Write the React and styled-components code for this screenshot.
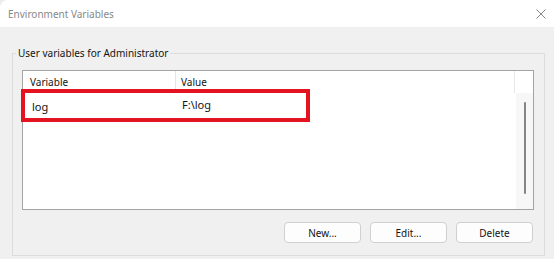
import React from "react";
import styled, { createGlobalStyle } from "styled-components";

const Global = createGlobalStyle`
  html, body { margin: 0; padding: 0; background: #ececec; }
  body { font-family: "Noto Sans", "Open Sans", sans-serif; font-size: 10px; color: #141414; }
`;

const Window = styled.div`
  width: 554px;
  height: 259px;
  display: flex;
  flex-direction: column;
  background: #f0f0f0;
  border-top-left-radius: 8px;
  overflow: hidden;
`;

const TitleBar = styled.div`
  height: 27px;
  flex: none;
  background: #ffffff;
  display: flex;
  align-items: center;
  justify-content: space-between;
  padding: 0 8px 0 8px;
  box-sizing: border-box;
`;

const Title = styled.span`
  color: #888888;
  font-size: 10px;
`;

const Body = styled.div`
  flex: 1;
  padding: 18px 9px 0 12px;
  box-sizing: border-box;
  display: flex;
  flex-direction: column;
`;

const Group = styled.fieldset`
  margin: 0;
  border: 1px solid #dcdcdc;
  padding: 0 10px 12px 9px;
  display: flex;
  flex-direction: column;
  min-width: 0;
`;

const Legend = styled.legend`
  margin-left: -6px;
  padding: 0 2px;
  line-height: 16px;
  font-size: 10px;
  color: #141414;
`;

const ListBox = styled.div`
  position: relative;
  margin-top: 9px;
  height: 140px;
  box-sizing: border-box;
  border: 1px solid #a3a3a3;
  background: #ffffff;
  display: flex;
`;

const ListArea = styled.div`
  flex: 1;
  display: flex;
  flex-direction: column;
`;

const Row = styled.div`
  display: flex;
  height: ${(p) => (p.$header ? "22px" : "24px")};
  align-items: center;
`;

const Cell = styled.div`
  box-sizing: border-box;
  width: ${(p) => (p.$w ? `${p.$w}px` : "auto")};
  flex: ${(p) => (p.$w ? "none" : "1")};
  padding-left: ${(p) => p.$pl}px;
  height: 100%;
  display: flex;
  align-items: center;
  font-size: ${(p) => (p.$big ? "11px" : "10px")};
  border-right: ${(p) => (p.$sep ? "1px solid #e5e5e5" : "none")};
  transform: translateY(${(p) => p.$dy || 0}px);
`;

const ScrollBar = styled.div`
  width: 17px;
  flex: none;
  display: flex;
  flex-direction: column;
  border-left: 1px solid #ffffff;
`;

const ScrollHead = styled.div`
  height: 22px;
  border-left: 1px solid #e8e8e8;
  margin-left: -2px;
`;

const Track = styled.div`
  flex: 1;
  background: #f7f7f7;
  display: flex;
  justify-content: center;
  padding-top: 9px;
  padding-bottom: 15px;
`;

const Thumb = styled.div`
  width: 2px;
  height: 92px;
  background: #858585;
  border-radius: 1px;
`;

const Highlight = styled.div`
  position: absolute;
  left: -2px;
  top: 18px;
  width: 289px;
  height: 33px;
  box-sizing: border-box;
  border: 4px solid #e3141f;
  pointer-events: none;
`;

const Buttons = styled.div`
  display: flex;
  justify-content: flex-end;
  gap: 9px;
  margin-top: 12px;
  padding-right: 1px;
`;

const Button = styled.button`
  width: 77px;
  height: 21px;
  box-sizing: border-box;
  background: #fdfdfd;
  border: 1px solid #d0d0d0;
  border-radius: 4px;
  font-family: inherit;
  font-size: 10px;
  color: #141414;
  padding: 0;
  line-height: 1;
`;

const CloseIcon = () => (
  <svg width="10" height="10" viewBox="0 0 10 10">
    <path d="M0.5 0.5 L9.5 9.5 M9.5 0.5 L0.5 9.5" stroke="#777777" strokeWidth="0.9" fill="none" />
  </svg>
);

export default function App() {
  return (
    <>
      <Global />
      <Window>
        <TitleBar>
          <Title>Environment Variables</Title>
          <CloseIcon />
        </TitleBar>
        <Body>
          <Group>
            <Legend>User variables for Administrator</Legend>
            <ListBox>
              <ListArea>
                <Row $header>
                  <Cell $w={153} $pl={7} $sep>Variable</Cell>
                  <Cell $pl={5}>Value</Cell>
                </Row>
                <Row>
                  <Cell $w={153} $pl={9} $dy={1} $big>log</Cell>
                  <Cell $pl={6} $dy={-1} $big>F:\log</Cell>
                </Row>
              </ListArea>
              <ScrollBar>
                <ScrollHead />
                <Track>
                  <Thumb />
                </Track>
              </ScrollBar>
              <Highlight />
            </ListBox>
            <Buttons>
              <Button>New...</Button>
              <Button>Edit...</Button>
              <Button>Delete</Button>
            </Buttons>
          </Group>
        </Body>
      </Window>
    </>
  );
}
